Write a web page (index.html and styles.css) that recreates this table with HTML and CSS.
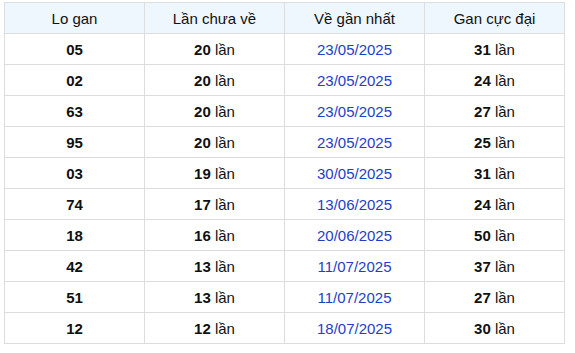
FILE: index.html
```html
<!DOCTYPE html>
<html lang="vi">
<head>
    <meta charset="UTF-8">
    <meta name="viewport" content="width=device-width, initial-scale=1.0">
    <title>Lo gan</title>
    <link rel="stylesheet" href="styles.css">
</head>
<body>
    <div class="khung">
        <table class="bang-gan">
            <thead>
                <tr>
                    <th>Lo gan</th>
                    <th>Lần chưa về</th>
                    <th>Về gần nhất</th>
                    <th>Gan cực đại</th>
                </tr>
            </thead>
            <tbody>
                <tr><td><b>05</b></td><td><b>20</b> lần</td><td class="ngay">23/05/2025</td><td><b>31</b> lần</td></tr>
                <tr><td><b>02</b></td><td><b>20</b> lần</td><td class="ngay">23/05/2025</td><td><b>24</b> lần</td></tr>
                <tr><td><b>63</b></td><td><b>20</b> lần</td><td class="ngay">23/05/2025</td><td><b>27</b> lần</td></tr>
                <tr><td><b>95</b></td><td><b>20</b> lần</td><td class="ngay">23/05/2025</td><td><b>25</b> lần</td></tr>
                <tr><td><b>03</b></td><td><b>19</b> lần</td><td class="ngay">30/05/2025</td><td><b>31</b> lần</td></tr>
                <tr><td><b>74</b></td><td><b>17</b> lần</td><td class="ngay">13/06/2025</td><td><b>24</b> lần</td></tr>
                <tr><td><b>18</b></td><td><b>16</b> lần</td><td class="ngay">20/06/2025</td><td><b>50</b> lần</td></tr>
                <tr><td><b>42</b></td><td><b>13</b> lần</td><td class="ngay">11/07/2025</td><td><b>37</b> lần</td></tr>
                <tr><td><b>51</b></td><td><b>13</b> lần</td><td class="ngay">11/07/2025</td><td><b>27</b> lần</td></tr>
                <tr><td><b>12</b></td><td><b>12</b> lần</td><td class="ngay">18/07/2025</td><td><b>30</b> lần</td></tr>
            </tbody>
        </table>
    </div>
</body>
</html>
```

FILE: styles.css
```css
body {
    margin: 0;
    background: #fff;
    font-family: "Liberation Sans", Arial, sans-serif;
    color: #111;
}
.khung {
    padding: 2px 0 0 4px;
}
.bang-gan {
    width: 561px;
    border-collapse: collapse;
    table-layout: fixed;
    font-size: 15px;
}
.bang-gan th,
.bang-gan td {
    border: 1px solid #dddddd;
    height: 30px;
    padding: 0;
    text-align: center;
    vertical-align: middle;
}
.bang-gan th {
    background: #eef6fe;
    font-weight: normal;
}
.bang-gan td.ngay {
    color: #1e40c8;
}
```
